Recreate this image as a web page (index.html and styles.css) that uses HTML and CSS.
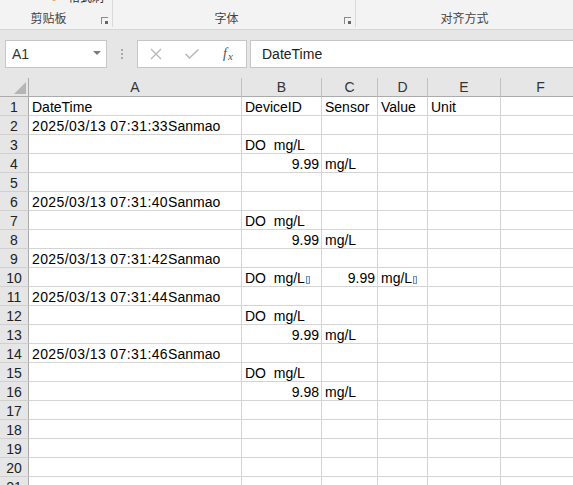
FILE: index.html
```html
<!DOCTYPE html>
<html lang="zh-CN">
<head>
<meta charset="utf-8">
<title>Sheet</title>
<link rel="stylesheet" href="styles.css">
</head>
<body>
<div class="ribbon">
  <div class="group g1">
    <div class="cutrow"><span class="odot"></span><span class="cut">格式刷</span></div>
    <div class="label">剪贴板</div>
    <span class="launcher"></span>
  </div>
  <div class="sep"></div>
  <div class="group g2">
    <div class="label">字体</div>
    <span class="launcher"></span>
  </div>
  <div class="sep"></div>
  <div class="group g3">
    <div class="label">对齐方式</div>
  </div>
</div>

<div class="fbar">
  <div class="namebox"><span class="nameval">A1</span><span class="ddarrow"></span></div>
  <div class="grip"><span></span><span></span><span></span></div>
  <div class="btnbox">
    <span class="fbtn"><svg width="12" height="12" viewBox="0 0 12 12"><path d="M1 1 L11 11 M11 1 L1 11" stroke="#b9b9b9" stroke-width="1.4" fill="none"/></svg></span>
    <span class="fbtn"><svg width="16" height="12" viewBox="0 0 16 12"><path d="M1.5 6 L5.5 10 L14.5 1.5" stroke="#b9b9b9" stroke-width="1.6" fill="none"/></svg></span>
    <span class="fbtn fx"><i>f</i><i class="x">x</i></span>
  </div>
  <div class="finput">DateTime</div>
</div>

<div class="sheet">
  <div class="row head">
    <div class="c rh corner"><span class="tri"></span></div>
    <div class="c ch">A</div><div class="c ch">B</div><div class="c ch">C</div><div class="c ch">D</div><div class="c ch">E</div><div class="c ch">F</div>
  </div>
  <div class="row"><div class="c rh">1</div><div class="c">DateTime</div><div class="c">DeviceID</div><div class="c">Sensor</div><div class="c">Value</div><div class="c">Unit</div><div class="c"></div></div>
  <div class="row"><div class="c rh">2</div><div class="c"><span class="dt">2025/03/13 07:31:33</span>Sanmao</div><div class="c"></div><div class="c"></div><div class="c"></div><div class="c"></div><div class="c"></div></div>
  <div class="row"><div class="c rh">3</div><div class="c"></div><div class="c">DO  mg/L</div><div class="c"></div><div class="c"></div><div class="c"></div><div class="c"></div></div>
  <div class="row"><div class="c rh">4</div><div class="c"></div><div class="c num">9.99</div><div class="c">mg/L</div><div class="c"></div><div class="c"></div><div class="c"></div></div>
  <div class="row"><div class="c rh">5</div><div class="c"></div><div class="c"></div><div class="c"></div><div class="c"></div><div class="c"></div><div class="c"></div></div>
  <div class="row"><div class="c rh">6</div><div class="c"><span class="dt">2025/03/13 07:31:40</span>Sanmao</div><div class="c"></div><div class="c"></div><div class="c"></div><div class="c"></div><div class="c"></div></div>
  <div class="row"><div class="c rh">7</div><div class="c"></div><div class="c">DO  mg/L</div><div class="c"></div><div class="c"></div><div class="c"></div><div class="c"></div></div>
  <div class="row"><div class="c rh">8</div><div class="c"></div><div class="c num">9.99</div><div class="c">mg/L</div><div class="c"></div><div class="c"></div><div class="c"></div></div>
  <div class="row"><div class="c rh">9</div><div class="c"><span class="dt">2025/03/13 07:31:42</span>Sanmao</div><div class="c"></div><div class="c"></div><div class="c"></div><div class="c"></div><div class="c"></div></div>
  <div class="row"><div class="c rh">10</div><div class="c"></div><div class="c">DO  mg/L<span class="tofu"></span></div><div class="c num">9.99</div><div class="c">mg/L<span class="tofu"></span></div><div class="c"></div><div class="c"></div></div>
  <div class="row"><div class="c rh">11</div><div class="c"><span class="dt">2025/03/13 07:31:44</span>Sanmao</div><div class="c"></div><div class="c"></div><div class="c"></div><div class="c"></div><div class="c"></div></div>
  <div class="row"><div class="c rh">12</div><div class="c"></div><div class="c">DO  mg/L</div><div class="c"></div><div class="c"></div><div class="c"></div><div class="c"></div></div>
  <div class="row"><div class="c rh">13</div><div class="c"></div><div class="c num">9.99</div><div class="c">mg/L</div><div class="c"></div><div class="c"></div><div class="c"></div></div>
  <div class="row"><div class="c rh">14</div><div class="c"><span class="dt">2025/03/13 07:31:46</span>Sanmao</div><div class="c"></div><div class="c"></div><div class="c"></div><div class="c"></div><div class="c"></div></div>
  <div class="row"><div class="c rh">15</div><div class="c"></div><div class="c">DO  mg/L</div><div class="c"></div><div class="c"></div><div class="c"></div><div class="c"></div></div>
  <div class="row"><div class="c rh">16</div><div class="c"></div><div class="c num">9.98</div><div class="c">mg/L</div><div class="c"></div><div class="c"></div><div class="c"></div></div>
  <div class="row"><div class="c rh">17</div><div class="c"></div><div class="c"></div><div class="c"></div><div class="c"></div><div class="c"></div><div class="c"></div></div>
  <div class="row"><div class="c rh">18</div><div class="c"></div><div class="c"></div><div class="c"></div><div class="c"></div><div class="c"></div><div class="c"></div></div>
  <div class="row"><div class="c rh">19</div><div class="c"></div><div class="c"></div><div class="c"></div><div class="c"></div><div class="c"></div><div class="c"></div></div>
  <div class="row"><div class="c rh">20</div><div class="c"></div><div class="c"></div><div class="c"></div><div class="c"></div><div class="c"></div><div class="c"></div></div>
  <div class="row"><div class="c rh">21</div><div class="c"></div><div class="c"></div><div class="c"></div><div class="c"></div><div class="c"></div><div class="c"></div></div>
</div>
</body>
</html>
```

FILE: styles.css
```css
html, body {
  margin: 0;
  padding: 0;
}
body {
  width: 573px;
  height: 485px;
  overflow: hidden;
  background: #e6e6e6;
  font-family: "Liberation Sans", Arial, "Noto Sans CJK SC", sans-serif;
  color: #000;
}

/* ribbon */
.ribbon {
  display: flex;
  height: 29px;
  background: #f3f3f3;
  border-bottom: 1px solid #d6d6d6;
  overflow: hidden;
}
.group {
  position: relative;
  display: flex;
  flex-direction: column;
  justify-content: flex-end;
  box-sizing: border-box;
  padding-right: 15px;
  padding-bottom: 3px;
}
.g1 { width: 115px; }
.g2 { width: 250px; }
.g3 { width: 224px; padding-right: 0; }
.sep {
  width: 1px;
  height: 27px;
  background: #d9d9d9;
}
.label {
  text-align: center;
  font-family: "Noto Sans CJK SC", sans-serif;
  font-size: 12px;
  line-height: 16px;
  color: #444;
}
.cutrow {
  position: absolute;
  left: 52px;
  top: -10px;
  display: flex;
  align-items: flex-end;
  gap: 12px;
  height: 13px;
}
.odot {
  width: 4px;
  height: 4px;
  border-radius: 2px;
  background: #e8a84a;
  margin-bottom: 2px;
}
.cut {
  font-family: "Noto Sans CJK SC", sans-serif;
  font-size: 12px;
  line-height: 13px;
  color: #333;
}
.launcher {
  position: absolute;
  right: 4px;
  bottom: 5px;
  width: 6px;
  height: 6px;
  border-left: 1px solid #8a8a8a;
  border-top: 1px solid #8a8a8a;
}
.launcher::after {
  content: "";
  position: absolute;
  right: 0;
  bottom: 0;
  width: 3px;
  height: 3px;
  background: #666;
}

/* formula bar */
.fbar {
  display: flex;
  align-items: center;
  height: 28px;
  padding: 10px 0 10px 5px;
}
.namebox {
  position: relative;
  box-sizing: border-box;
  width: 102px;
  height: 28px;
  background: #fff;
  border: 1px solid #c6c6c6;
  display: flex;
  align-items: center;
}
.nameval {
  padding-left: 6px;
  font-size: 14px;
  color: #333;
}
.ddarrow {
  position: absolute;
  right: 5px;
  top: 10px;
  width: 0;
  height: 0;
  border-left: 4px solid transparent;
  border-right: 4px solid transparent;
  border-top: 4px solid #7a7a7a;
}
.grip {
  width: 30px;
  display: flex;
  flex-direction: column;
  align-items: center;
  gap: 2px;
}
.grip span {
  width: 2px;
  height: 2px;
  background: #a8a8a8;
}
.btnbox {
  box-sizing: border-box;
  width: 110px;
  height: 28px;
  background: #fff;
  border: 1px solid #c6c6c6;
  display: flex;
  align-items: center;
}
.fbtn {
  width: 36px;
  display: flex;
  justify-content: center;
  align-items: center;
}
.fx {
  font-family: "Liberation Serif", "Times New Roman", serif;
  font-size: 14px;
  color: #555;
}
.fx .x {
  font-size: 11px;
  margin-left: 1px;
  margin-top: 3px;
}
.finput {
  box-sizing: border-box;
  flex: 1;
  height: 28px;
  margin-left: 3px;
  margin-right: -2px;
  background: #fff;
  border: 1px solid #c6c6c6;
  padding-left: 11px;
  font-size: 14px;
  line-height: 26px;
  color: #222;
}

/* sheet */
.sheet {
  background: #fff;
}
.row {
  display: grid;
  grid-template-columns: 29px 213px 80px 56px 50px 73px 80px;
  height: 19px;
}
.c {
  box-sizing: border-box;
  height: 19px;
  border-right: 1px solid #d4d4d4;
  border-bottom: 1px solid #d4d4d4;
  padding: 2px 2px 0 3px;
  font-size: 14px;
  line-height: 17px;
  white-space: pre;
  overflow: visible;
  color: #000;
}
.num {
  text-align: right;
}
.dt {
  letter-spacing: 0.4px;
}
.rh {
  background: #e6e6e6;
  border-right: 1px solid #ababab;
  border-bottom: 1px solid #d0d0d0;
  text-align: center;
  padding: 2px 0 0 0;
  color: #222;
}
.head .c {
  background: #e6e6e6;
  border-bottom: 1px solid #ababab;
  padding-top: 0;
  line-height: 18px;
}
.head .ch {
  border-right: 1px solid #c2c2c2;
  text-align: center;
  padding: 0;
  color: #333;
}
.corner {
  position: relative;
}
.tri {
  position: absolute;
  right: 2px;
  bottom: 2px;
  width: 0;
  height: 0;
  border-left: 12px solid transparent;
  border-bottom: 12px solid #b5b5b5;
}
.tofu {
  display: inline-block;
  box-sizing: border-box;
  width: 4px;
  height: 8px;
  margin-left: 1px;
  border: 1px solid #6e94c8;
  background: #e3ecf8;
  vertical-align: -1px;
}
```
